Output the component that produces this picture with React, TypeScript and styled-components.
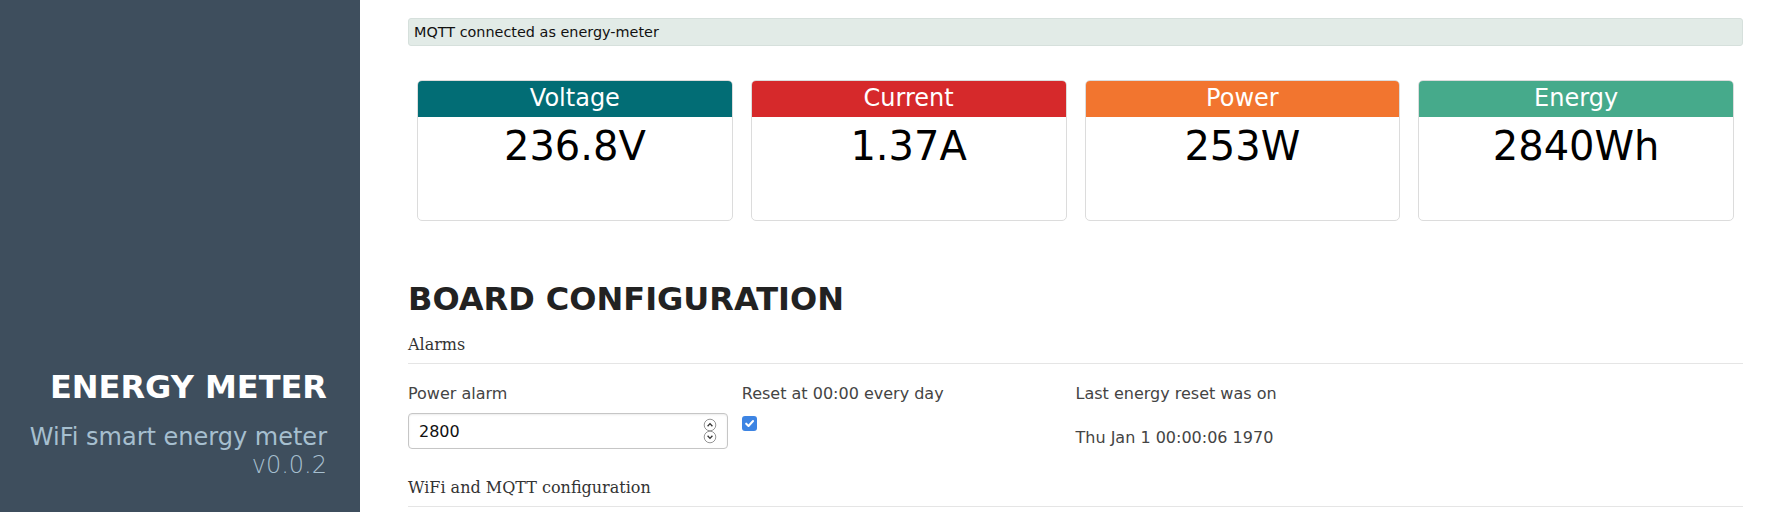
import styled, { createGlobalStyle } from "styled-components";

const cards = [
    { title: "Voltage", value: "236.8V", color: "#026d75" },
    { title: "Current", value: "1.37A", color: "#d6292b" },
    { title: "Power", value: "253W", color: "#f2752f" },
    { title: "Energy", value: "2840Wh", color: "#46aa8b" },
];

const App = () => {
    return <>
        <GlobalStyle />
        <Page>
            <Sidebar>
                <Brand>ENERGY METER</Brand>
                <Tagline>WiFi smart energy meter</Tagline>
                <Version>v0.0.2</Version>
            </Sidebar>
            <Main>
                <StatusBar>MQTT connected as energy-meter</StatusBar>
                <CardRow>
                    {cards.map(c => (
                        <Card key={c.title}>
                            <CardHeader $color={c.color}>{c.title}</CardHeader>
                            <CardValue>{c.value}</CardValue>
                        </Card>
                    ))}
                </CardRow>
                <SectionTitle>BOARD CONFIGURATION</SectionTitle>
                <Legend>Alarms</Legend>
                <FormGrid>
                    <Field>
                        <Label>Power alarm</Label>
                        <NumberBox>
                            <NumberInput defaultValue="2800" />
                            <Spinner width="14" height="26" viewBox="0 0 14 26">
                                <circle cx="7" cy="7" r="5.8" fill="#fff" stroke="#8a8a8a" strokeWidth="0.9" />
                                <path d="M4.6 8.2 L7 5.6 L9.4 8.2" fill="none" stroke="#333" strokeWidth="1.3" />
                                <circle cx="7" cy="19" r="5.8" fill="#fff" stroke="#8a8a8a" strokeWidth="0.9" />
                                <path d="M4.6 17.8 L7 20.4 L9.4 17.8" fill="none" stroke="#333" strokeWidth="1.3" />
                            </Spinner>
                        </NumberBox>
                    </Field>
                    <Field>
                        <Label>Reset at 00:00 every day</Label>
                        <CheckBox>
                            <svg width="11" height="11" viewBox="0 0 10 10">
                                <path d="M2 5.2 L4.1 7.2 L8.2 2.8" fill="none" stroke="#fff" strokeWidth="1.9" strokeLinecap="round" strokeLinejoin="round" />
                            </svg>
                        </CheckBox>
                    </Field>
                    <Field>
                        <Label>Last energy reset was on</Label>
                        <ResetDate>Thu Jan 1 00:00:06 1970</ResetDate>
                    </Field>
                </FormGrid>
                <Legend $top={29}>WiFi and MQTT configuration</Legend>
            </Main>
        </Page>
    </>
}

export default App;

const GlobalStyle = createGlobalStyle`
    body {
        margin: 0;
        background: #fff;
        font-family: "DejaVu Sans", "Noto Sans", sans-serif;
    }
`;

const Page = styled.div`
    display: flex;
    min-height: 512px;
`;

const Sidebar = styled.div`
    width: 360px;
    flex-shrink: 0;
    box-sizing: border-box;
    background-color: #3e4e5d;
    display: flex;
    flex-direction: column;
    justify-content: flex-end;
    align-items: flex-end;
    text-align: right;
    padding: 0 33px 33px 0;
`;

const Brand = styled.div`
    font-size: 32px;
    font-weight: bold;
    color: #fff;
    margin-bottom: 17px;
`;

const Tagline = styled.div`
    font-size: 24px;
    color: #a6bfcf;
`;

const Version = styled.div`
    font-size: 24px;
    font-weight: 200;
    color: #a6bfcf;
`;

const Main = styled.div`
    flex: 1;
    padding: 18px 29px 0 48px;
    min-width: 0;
`;

const StatusBar = styled.div`
    height: 28px;
    box-sizing: border-box;
    line-height: 26px;
    padding: 0 5px;
    font-size: 14.4px;
    color: #111;
    background-color: #e2ebe7;
    border: 1px solid #d6e0dc;
    border-radius: 3px;
`;

const CardRow = styled.div`
    display: grid;
    grid-template-columns: repeat(4, 1fr);
    gap: 18px;
    margin-top: 34px;
    padding: 0 9px;
`;

const Card = styled.div`
    height: 141px;
    box-sizing: border-box;
    border: 1px solid #dcdcdc;
    border-radius: 5px;
    overflow: hidden;
    text-align: center;
`;

const CardHeader = styled.div<{ $color: string }>`
    margin: -1px -1px 0;
    height: 37px;
    line-height: 37px;
    font-size: 24px;
    color: #fff;
    background-color: ${p => p.$color};
    border-radius: 5px 5px 0 0;
`;

const CardValue = styled.div`
    margin-top: 6px;
    font-size: 40px;
    color: #000;
`;

const SectionTitle = styled.h1`
    margin: 59px 0 0;
    font-size: 32px;
    font-weight: bold;
    color: #222;
`;

const Legend = styled.div<{ $top?: number }>`
    margin-top: ${p => p.$top ?? 17}px;
    padding-bottom: 9px;
    border-bottom: 1px solid #e5e5e5;
    font-family: "DejaVu Serif", serif;
    font-size: 16px;
    color: #333;
`;

const FormGrid = styled.div`
    display: grid;
    grid-template-columns: repeat(4, 1fr);
    margin-top: 20px;
`;

const Field = styled.div`
    display: flex;
    flex-direction: column;
    align-items: flex-start;
`;

const Label = styled.div`
    font-size: 16px;
    color: #444;
`;

const NumberBox = styled.div`
    margin-top: 10px;
    width: 320px;
    height: 36px;
    box-sizing: border-box;
    display: flex;
    align-items: center;
    padding: 0 10px 0 10px;
    border: 1px solid #c6c6c6;
    border-radius: 4px;
    box-shadow: inset 0 1px 2px rgba(0, 0, 0, 0.08);
    background: #fff;
`;

const NumberInput = styled.input`
    flex: 1;
    min-width: 0;
    border: none;
    outline: none;
    padding: 0;
    font-family: "DejaVu Sans", sans-serif;
    font-size: 16px;
    color: #111;
    background: transparent;
`;

const Spinner = styled.svg`
    flex-shrink: 0;
`;

const CheckBox = styled.span`
    margin-top: 13px;
    width: 15px;
    height: 15px;
    border-radius: 3px;
    background-color: #3d84e3;
    display: flex;
    align-items: center;
    justify-content: center;
`;

const ResetDate = styled.div`
    margin-top: 25px;
    font-size: 16px;
    color: #444;
`;
